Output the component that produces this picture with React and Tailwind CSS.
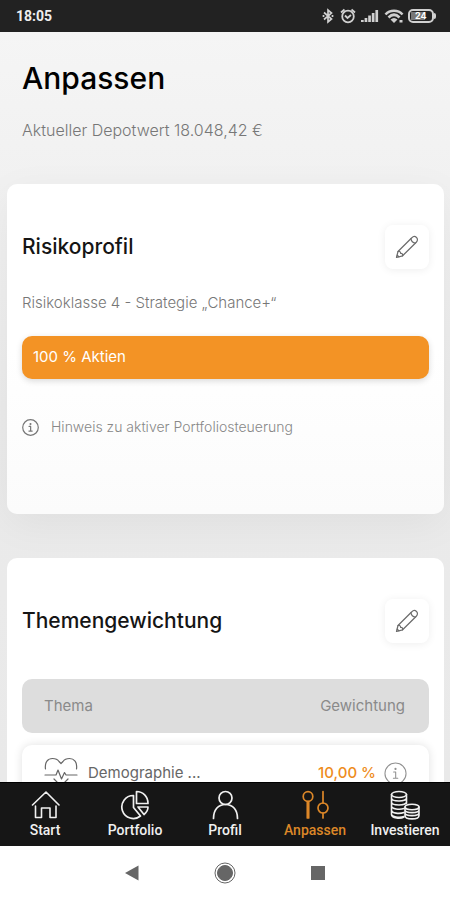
import React, { useState } from 'react';

const PencilIcon = () => (
  <svg className="w-6 h-6" viewBox="0 0 24 24" fill="none" stroke="currentColor" strokeWidth="1.2" strokeLinecap="round" strokeLinejoin="round">
    <path d="M1.5 22.5 3 16.5 16.8 2.8C18.2 1.3 20.2 1.3 21.5 2.5 22.8 3.8 22.8 5.8 21.3 7.2L7.6 20.8 1.5 22.5Z" />
    <path d="M3 16.5C5 16.3 5.8 17 5.7 18.5 7.2 18.3 7.8 19.2 7.6 20.8M16 3.6C16 6 18 8.2 20.5 8M2.2 20.2 3.9 21.8" />
  </svg>
);

const InfoIcon = ({ className, thin }) => (
  <svg className={className} viewBox="0 0 24 24" fill="none" stroke="currentColor" strokeWidth={thin ? 1.1 : 1.7} strokeLinecap="round" strokeLinejoin="round">
    <circle cx="12" cy="12" r="11" />
    <path d="M10 10.5h2.2v6.5M9.8 17h4.6" />
    <circle cx="12" cy="7.2" r=".6" fill="currentColor" />
  </svg>
);

const HeartPulseIcon = () => (
  <svg className="w-8.5 h-8" viewBox="0 0 34 32" fill="none" stroke="currentColor" strokeWidth="1.2" strokeLinecap="round" strokeLinejoin="round">
    <path d="M1.5 12C.5 5 4 1.5 8.5 1.5 12 1.5 14 3 15 4.5L17 6.5 19 4.5C20 3 22 1.5 25.5 1.5 30 1.5 33.5 5 32.5 12" />
    <path d="M1 18h11l2-5 3.5 9 3-6.5 1.5 2.5h11" />
    <path d="M10 22l7 7 7-7" />
  </svg>
);

const HomeIcon = () => (
  <svg className="w-7.5 h-7.5" viewBox="0 0 30 30" fill="none" stroke="currentColor" strokeWidth="1.6" strokeLinecap="round" strokeLinejoin="round">
    <path d="M2.5 15 16 2 29 15M5.5 16v11.5h6v-9.5h8.5v9.5h6V16" />
  </svg>
);

const PieIcon = () => (
  <svg className="w-7.5 h-7.5" viewBox="0 0 30 30" fill="none" stroke="currentColor" strokeWidth="1.7" strokeLinejoin="round">
    <path d="M13.5 5.5A11.5 11.5 0 1 0 20.5 26L13.5 17.5Z" />
    <path d="M16.5 1.5C23 1.5 28 6.5 28 13.5H16.5Z" />
    <path d="M18 17h10c0 3-1.5 5.5-4 7.5Z" />
  </svg>
);

const ProfileIcon = () => (
  <svg className="w-7.5 h-7.5" viewBox="0 0 30 30" fill="none" stroke="currentColor" strokeWidth="1.7" strokeLinecap="round">
    <circle cx="15.5" cy="8" r="6.5" />
    <path d="M3.5 28.5C3.5 20 8 14.5 15.5 14.5S27.5 20 27.5 28.5" />
  </svg>
);

const SlidersIcon = () => (
  <svg className="w-7.5 h-7.5" viewBox="0 0 30 30" fill="none" stroke="currentColor" strokeWidth="1.7" strokeLinecap="round">
    <circle cx="8" cy="6.5" r="4.8" />
    <path d="M7.3 11.5v16.5M8.7 11.5v16.5M23 1.5v11.5M23 23v5" />
    <circle cx="23" cy="18" r="5" />
  </svg>
);

const CoinsIcon = () => (
  <svg className="w-7.5 h-7.5" viewBox="0 0 30 30" fill="none" stroke="currentColor" strokeWidth="1.6" strokeLinecap="round">
    <ellipse cx="9" cy="4.5" rx="7.5" ry="3" />
    <path d="M1.5 4.5v20c0 4 9 4.5 12.5 2.5M16.5 4.5v9M1.5 8c0 4 15 4 15 0M1.5 12c0 4 15 4 15 0M1.5 16c0 3 8 4 12.5 2.5M1.5 20c0 3.5 8 4 12.5 2.5M1.5 24c0 3 8 4 12.5 2.5" />
    <ellipse cx="22" cy="17" rx="7" ry="2.8" />
    <path d="M15 17v8.5c0 4.5 14 4.5 14 0V17M15 20c0 3.5 14 3.5 14 0M15 23c0 3.5 14 3.5 14 0" />
  </svg>
);

const StatusIcons = () => (
  <div className="flex items-center gap-1 text-[#d0d0d0]">
    <svg className="w-4 h-4" viewBox="0 0 16 16" fill="none" stroke="currentColor" strokeWidth="1.7">
      <path d="M4 4.5 11.5 11 8 14V2L11.5 5 4 11.5" />
      <path d="M3.5 7v2M12.5 7v2" />
    </svg>
    <svg className="w-4 h-4" viewBox="0 0 16 16" fill="none" stroke="currentColor" strokeWidth="1.8">
      <circle cx="8" cy="8.5" r="5.8" />
      <path d="M1 4.5 4.5 1.5M15 4.5 11.5 1.5M5 7.5l2.5 2.5L11 7" />
    </svg>
    <svg className="w-5 h-4" viewBox="0 0 20 16" fill="currentColor">
      <path d="M1 12h2.7v2H1zM4.6 10h2.7v4H4.6zM8.2 7.5h2.7V14H8.2zM11.8 5h2.7v9h-2.7zM15.4 2h2.7v12h-2.7z" />
    </svg>
    <svg className="w-5 h-4" viewBox="0 0 20 16" fill="none" stroke="currentColor" strokeWidth="2.6">
      <path d="M1.5 6.5C6 1.5 14 1.5 18.5 6.5M4.5 9.5c3.5-3.5 7.5-3.5 11 0" />
      <path d="M6.5 11.5q3.5-3 7 0L10 15Z" fill="currentColor" stroke="none" />
      <path d="M15.5 12h3v2.5h-3z" fill="currentColor" stroke="none" />
    </svg>
    <div className="flex items-center">
      <div className="w-6.5 h-3.5 rounded-[5px] border-2 border-current p-px flex">
        <span className="w-3.5 bg-[#777] text-white text-[9px] leading-2 font-bold pl-1">24</span>
      </div>
      <div className="w-0.5 h-1.5 rounded-r bg-current" />
    </div>
  </div>
);

const Card = ({ title, className, children }) => (
  <section className={`rounded-[10px] px-[15px] pt-[41px] ${className}`}>
    <div className="flex items-center justify-between">
      <h2 className="text-[21px] leading-7 font-medium text-[#151515]">{title}</h2>
      <button
        aria-label={`${title} bearbeiten`}
        className="w-11 h-11 flex items-center justify-center rounded-lg bg-white text-[#6b6b6b] shadow-[0_1px_8px_rgba(0,0,0,0.07)]"
      >
        <PencilIcon />
      </button>
    </div>
    {children}
  </section>
);

const tabs = [
  { name: 'Start', icon: HomeIcon },
  { name: 'Portfolio', icon: PieIcon },
  { name: 'Profil', icon: ProfileIcon },
  { name: 'Anpassen', icon: SlidersIcon },
  { name: 'Investieren', icon: CoinsIcon },
];

const themes = [{ name: 'Demographie ...', weight: '10,00 %' }];

const App = () => {
  const [active, setActive] = useState('Anpassen');

  return (
    <div className="h-screen flex flex-col bg-white font-['Inter',sans-serif]">
      <div className="h-8 shrink-0 flex items-center justify-between pl-4 pr-3.5 bg-[#222]">
        <span className="font-['Roboto',sans-serif] text-sm font-bold text-[#eee]">18:05</span>
        <StatusIcons />
      </div>

      <main className="flex-1 min-h-0 overflow-y-auto [scrollbar-width:none] pl-[7px] pr-1.5 bg-linear-to-b from-[#f5f5f5] via-[#ebebeb] to-[#e9e9e9]">
        <header className="px-[15px] pt-6 pb-11">
          <h1 className="text-[30px] leading-11 font-medium text-black">Anpassen</h1>
          <p className="mt-5 text-base leading-5 font-light text-[#777]">Aktueller Depotwert 18.048,42 €</p>
        </header>

        <Card title="Risikoprofil" className="pb-[75px] bg-linear-to-b from-white via-white to-[#fbfbfb] shadow-[0_10px_40px_rgba(0,0,0,0.05)]">
          <p className="mt-6 text-[15px] leading-5 font-light text-[#777]">Risikoklasse 4 - Strategie „Chance+“</p>
          <div className="mt-[23px] h-[43px] flex items-center px-[11px] rounded-[10px] bg-[#f39325] text-[15px] text-white shadow-[0_2px_6px_rgba(0,0,0,0.15)]">
            100 % Aktien
          </div>
          <button className="mt-9 h-6 flex items-center gap-3 text-sm font-light text-[#888]">
            <InfoIcon className="w-[17px] h-[17px] text-[#777]" />
            Hinweis zu aktiver Portfoliosteuerung
          </button>
        </Card>

        <Card title="Themengewichtung" className="mt-11 pb-10 bg-white">
          <table className="block mt-9">
            <thead className="block">
              <tr className="h-[54px] flex items-center justify-between pl-[22px] pr-6 rounded-[10px] bg-[#ddd] text-[15px] text-[#8a8a8a]">
                <th className="font-normal">Thema</th>
                <th className="font-normal">Gewichtung</th>
              </tr>
            </thead>
            <tbody className="block mt-3">
              {themes.map((theme) => (
                <tr key={theme.name} className="h-14 flex items-center justify-between px-[22px] rounded-[10px] bg-white text-[15px] shadow-[0_0_10px_rgba(0,0,0,0.12)]">
                  <td className="flex items-center gap-2.5 text-[#666]">
                    <HeartPulseIcon />
                    {theme.name}
                  </td>
                  <td className="flex items-center gap-2 text-[#ee8c1c] font-medium">
                    {theme.weight}
                    <button aria-label="Info" className="text-[#909090]">
                      <InfoIcon thin className="w-[23px] h-[23px]" />
                    </button>
                  </td>
                </tr>
              ))}
            </tbody>
          </table>
        </Card>
      </main>

      <nav className="h-16 shrink-0 grid grid-cols-5 bg-[#161616] border-t border-black font-['Roboto',sans-serif]">
        {tabs.map(({ name, icon: Icon }) => (
          <button
            key={name}
            onClick={() => setActive(name)}
            className={`pt-[7px] flex flex-col items-center text-sm leading-5 font-medium ${active === name ? 'text-[#dc8728]' : 'text-[#f0f0f0]'}`}
          >
            <Icon />
            {name}
          </button>
        ))}
      </nav>

      <div className="h-[54px] shrink-0 flex items-center justify-center gap-[72px] text-[#666]">
        <button aria-label="Zurück">
          <svg className="w-5 h-5" viewBox="0 0 20 20" fill="currentColor"><path d="M3 10 16.5 2.5v15Z" /></svg>
        </button>
        <button aria-label="Home">
          <svg className="w-[22px] h-[22px]" viewBox="0 0 22 22" fill="none" stroke="currentColor">
            <circle cx="11" cy="11" r="10" />
            <circle cx="11" cy="11" r="7.5" fill="currentColor" />
          </svg>
        </button>
        <button aria-label="Letzte Apps">
          <svg className="w-5 h-5" viewBox="0 0 20 20" fill="currentColor"><path d="M3 3h14v14H3z" /></svg>
        </button>
      </div>
    </div>
  );
};

export default App;
